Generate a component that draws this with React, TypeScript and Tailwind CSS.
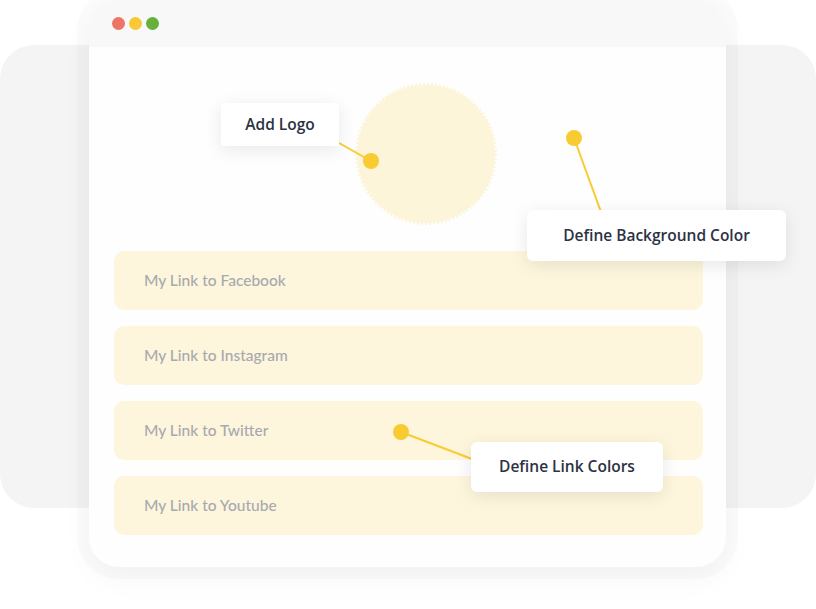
import React from 'react'

const links = ['My Link to Facebook', 'My Link to Instagram', 'My Link to Twitter', 'My Link to Youtube']

const Callout = ({ label, className }: { label: string; className: string }) => (
	<div
		className={`absolute flex items-center justify-center bg-white font-['Open_Sans',sans-serif] text-[15.5px] font-semibold text-[#2b3243] shadow-[0_4px_18px_rgba(0,0,0,0.09)] ${className}`}
	>
		{label}
	</div>
)

export default function App() {
	return (
		<div className="relative h-[609px] w-[816px] overflow-hidden bg-white font-['Lato',sans-serif]">
			{/* gray backdrop behind the window */}
			<div className="absolute left-0 top-[45px] h-[463px] w-[816px] rounded-[34px] bg-[#f4f4f4]" />

			<div className="relative ml-[89px] flex h-[567px] w-[637px] flex-col overflow-hidden rounded-[30px] bg-[#fefefe] shadow-[0_0_0_12px_rgba(0,0,0,0.015),0_12px_30px_rgba(0,0,0,0.04)]">
				<div className="flex h-[47px] items-center gap-[4px] bg-[#f8f8f8] pl-[23px]">
					<span className="h-[13px] w-[13px] rounded-full bg-[#ee7565]" />
					<span className="h-[13px] w-[13px] rounded-full bg-[#f7c934]" />
					<span className="h-[13px] w-[13px] rounded-full bg-[#68b03e]" />
				</div>

				<div className="flex flex-col px-[25px] pr-[23px]">
					<svg className="ml-[241px] mt-[36px]" width="142" height="142" viewBox="0 0 142 142">
						<circle cx="71" cy="71" r="69" fill="#fdf5d9" />
						<circle cx="71" cy="71" r="69.5" fill="none" stroke="#fdf5d9" strokeWidth="3" strokeDasharray="2 2" />
					</svg>

					<div className="mt-[26px] flex flex-col gap-[16px]">
						{links.map((l) => (
							<div key={l} className="flex h-[59px] items-center rounded-[10px] bg-[#fdf6dd] pl-[30px] text-[15.5px] font-medium text-[#a8a9ae]">
								{l}
							</div>
						))}
					</div>
				</div>
			</div>

			<svg className="pointer-events-none absolute left-0 top-0" width="816" height="609">
				<line x1="339" y1="143" x2="371" y2="161" stroke="#f8cb33" strokeWidth="2" />
				<circle cx="371" cy="161" r="8" fill="#f8cb33" />
				<line x1="574" y1="138" x2="601" y2="212" stroke="#f8cb33" strokeWidth="2" />
				<circle cx="574" cy="138" r="8" fill="#f8cb33" />
				<line x1="401" y1="432" x2="472" y2="459" stroke="#f8cb33" strokeWidth="2" />
				<circle cx="401" cy="432" r="8" fill="#f8cb33" />
			</svg>

			<Callout label="Add Logo" className="left-[221px] top-[103px] h-[43px] w-[118px] rounded-[2px]" />
			<Callout label="Define Background Color" className="left-[527px] top-[210px] h-[51px] w-[259px] rounded-[6px]" />
			<Callout label="Define Link Colors" className="left-[471px] top-[442px] h-[50px] w-[192px] rounded-[6px]" />
		</div>
	)
}
